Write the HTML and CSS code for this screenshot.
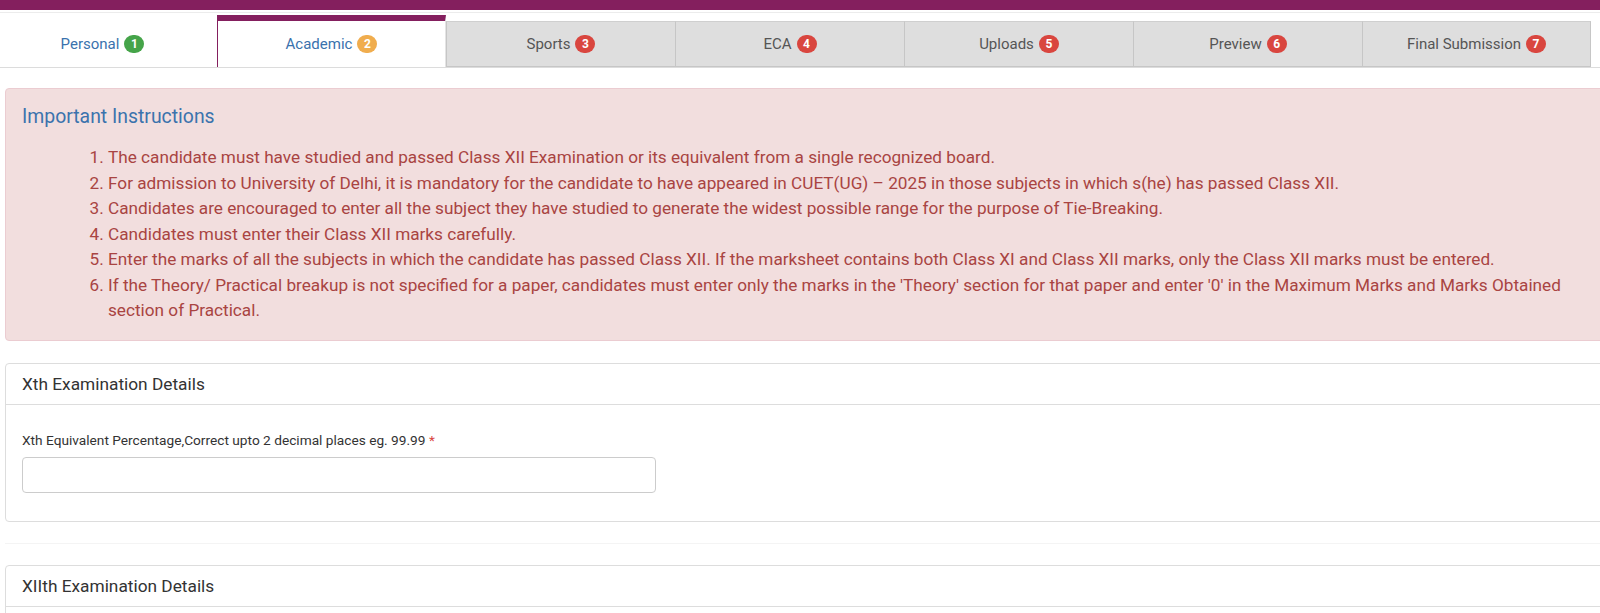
FILE: index.html
```html
<!DOCTYPE html>
<html>
<head>
<meta charset="utf-8">
<link rel="stylesheet" href="styles.css">
</head>
<body>
<div class="topbar"></div>
<div class="subline"></div>
<nav class="tabs">
  <div class="tab done"><span class="lbl">Personal</span><span class="badge green">1</span></div>
  <div class="tab active"><span class="lbl">Academic</span><span class="badge orange">2</span></div>
  <div class="tab gray"><span class="lbl">Sports</span><span class="badge red">3</span></div>
  <div class="tab gray"><span class="lbl">ECA</span><span class="badge red">4</span></div>
  <div class="tab gray"><span class="lbl">Uploads</span><span class="badge red">5</span></div>
  <div class="tab gray"><span class="lbl">Preview</span><span class="badge red">6</span></div>
  <div class="tab gray last"><span class="lbl">Final Submission</span><span class="badge red">7</span></div>
</nav>
<main class="content">
  <div class="alert">
    <h4 class="alert-title">Important Instructions</h4>
    <ol class="rules">
      <li>The candidate must have studied and passed Class XII Examination or its equivalent from a single recognized board.</li>
      <li>For admission to University of Delhi, it is mandatory for the candidate to have appeared in CUET(UG) – 2025 in those subjects in which s(he) has passed Class XII.</li>
      <li>Candidates are encouraged to enter all the subject they have studied to generate the widest possible range for the purpose of Tie-Breaking.</li>
      <li>Candidates must enter their Class XII marks carefully.</li>
      <li>Enter the marks of all the subjects in which the candidate has passed Class XII. If the marksheet contains both Class XI and Class XII marks, only the Class XII marks must be entered.</li>
      <li>If the Theory/ Practical breakup is not specified for a paper, candidates must enter only the marks in the 'Theory' section for that paper and enter '0' in the Maximum Marks and Marks Obtained section of Practical.</li>
    </ol>
  </div>
  <section class="panel">
    <div class="panel-head">Xth Examination Details</div>
    <div class="panel-body">
      <label class="field-label">Xth Equivalent Percentage,Correct upto 2 decimal places eg. 99.99 <span class="req">*</span></label>
      <input class="field" type="text">
    </div>
  </section>
  <div class="divider"></div>
  <section class="panel">
    <div class="panel-head">XIIth Examination Details</div>
    <div class="panel-body tall"></div>
  </section>
</main>
</body>
</html>
```
FILE: styles.css
```css
html, body {
  margin: 0;
  padding: 0;
  overflow: hidden;
  background: #fff;
}
body {
  font-family: Roboto, "Liberation Sans", sans-serif;
  color: #333;
}
.topbar {
  height: 10px;
  background: #841f5e;
}
.subline {
  margin-top: 2px;
  height: 1px;
  background: #ececec;
}
.tabs {
  margin-top: 2px;
  margin-left: -12px;
  display: grid;
  grid-template-columns: repeat(7, 229px);
  height: 52px;
  border-bottom: 1px solid #dcdcdc;
  width: 1612px;
}
.tab {
  display: flex;
  align-items: center;
  justify-content: center;
  gap: 5px;
  font-size: 15px;
  box-sizing: border-box;
}
.tab.done {
  margin-top: 6px;
  background: #fff;
  color: #3a72ad;
}
.tab.active {
  background: #fff;
  color: #3a72ad;
  border-top: 6px solid #841f5e;
  border-left: 1px solid #841f5e;
  border-right: 1px solid #e4e4e4;
}
.tab.gray {
  margin-top: 6px;
  background: #dedede;
  color: #555;
  border-top: 1px solid #cfcfcf;
  border-left: 1px solid #c6c6c6;
  border-bottom: 1px solid #c6c6c6;
}
.tab.last {
  border-right: 1px solid #c6c6c6;
}
.badge {
  display: inline-block;
  min-width: 20px;
  height: 18px;
  box-sizing: border-box;
  padding: 0 6px;
  border-radius: 9px;
  font-size: 12px;
  font-weight: 700;
  line-height: 18px;
  text-align: center;
  color: #fff;
}
.badge.green { background: #45a449; }
.badge.orange { background: #f0ad4e; }
.badge.red { background: #d9463f; }

.content {
  padding: 20px 0 0 5px;
  width: 1605px;
}
.alert {
  background: #f2dede;
  border: 1px solid #ebccd1;
  border-radius: 4px;
  padding: 17px 16px 16px 16px;
  color: #a94442;
}
.alert-title {
  margin: 0;
  font-size: 19.4px;
  font-weight: 400;
  line-height: 22px;
  color: #3b73ad;
}
.rules {
  margin: 17px 0 0 0;
  padding-left: 86px;
  padding-right: 20px;
  font-size: 17.2px;
  line-height: 25.5px;
}
.panel {
  margin-top: 21px;
  border: 1px solid #ddd;
  border-radius: 4px;
  background: #fff;
}
.alert + .panel {
  margin-top: 22px;
}
.panel-head {
  padding: 10px 16px;
  font-size: 17.3px;
  line-height: 20px;
  color: #333;
  border-bottom: 1px solid #ddd;
}
.panel-body {
  padding: 27px 16px 28px 16px;
}
.panel-body.tall {
  height: 200px;
}
.field-label {
  display: block;
  font-size: 13.7px;
  line-height: 16px;
  color: #333;
  margin-bottom: 9px;
}
.req {
  color: #d9463f;
}
.field {
  display: block;
  width: 634px;
  height: 36px;
  box-sizing: border-box;
  border: 1px solid #ccc;
  border-radius: 4px;
  padding: 6px 12px;
  font-family: inherit;
  font-size: 14px;
  background: #fff;
}
.divider {
  margin-top: 21px;
  height: 1px;
  background: #f4f4f4;
}
```
